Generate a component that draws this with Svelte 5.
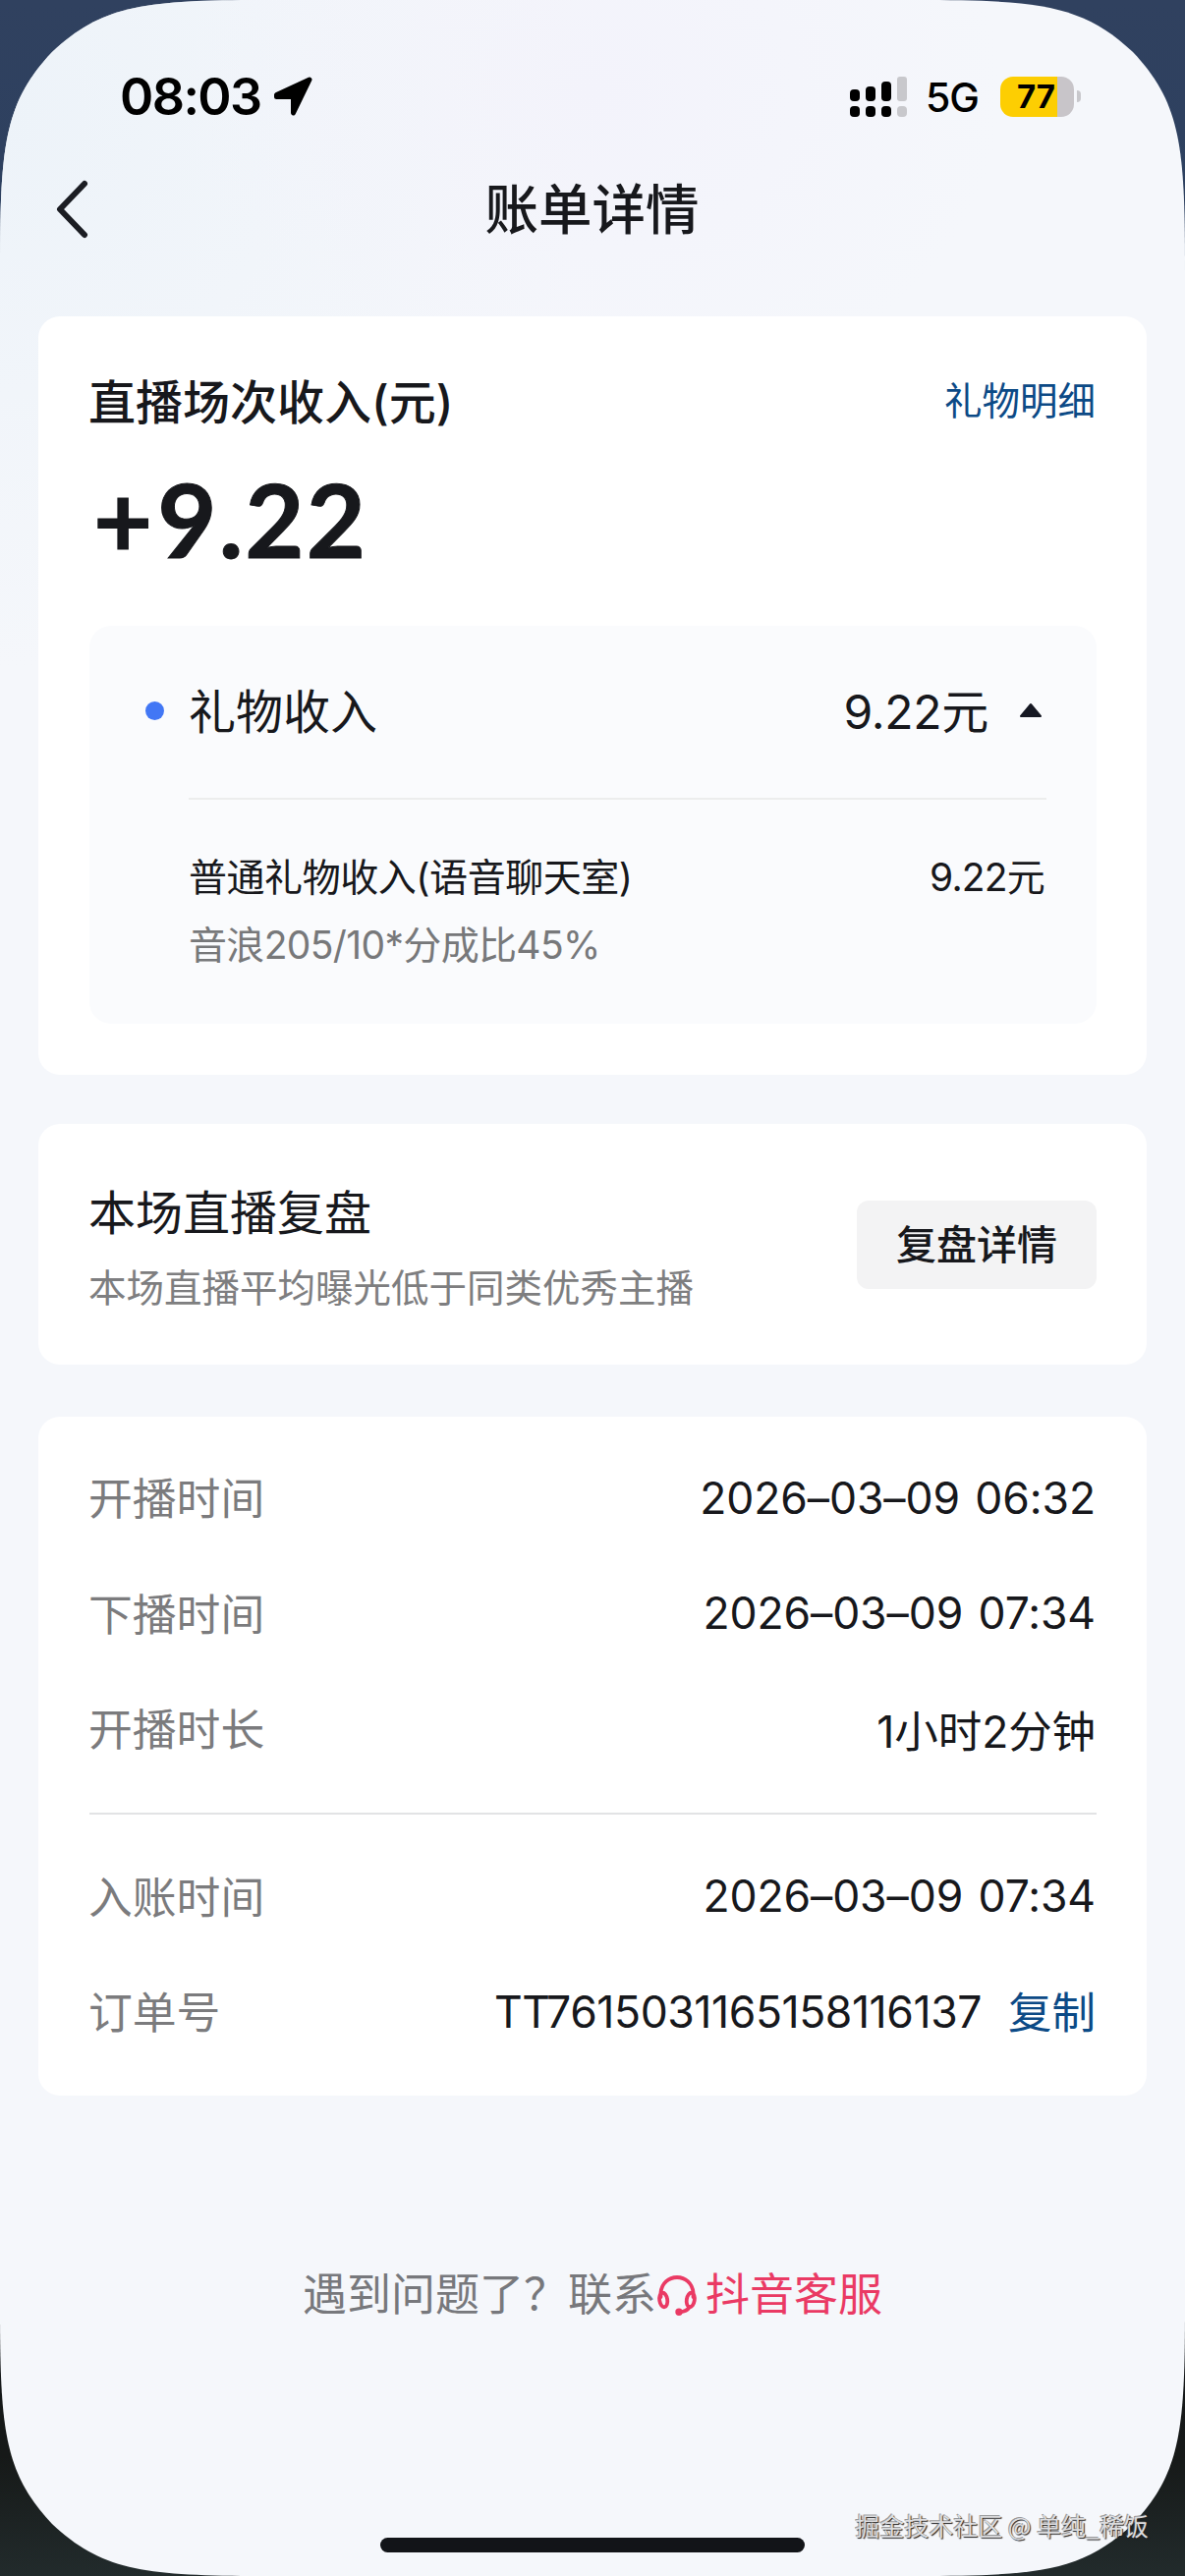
<script>
  let expanded = true;
  let copied = false;

  const gift = {
    name: "礼物收入",
    amount: "9.22元",
    detail: "普通礼物收入(语音聊天室)",
    formula: "音浪205/10*分成比45%",
  };

  const times = [
    { label: "开播时间", value: "2026–03–09 06:32" },
    { label: "下播时间", value: "2026–03–09 07:34" },
    { label: "开播时长", value: "1小时2分钟" },
  ];

  const orderNo = "TT7615031165158116137";

  function toggle() {
    expanded = !expanded;
  }

  function copyOrder() {
    navigator.clipboard?.writeText(orderNo);
    copied = true;
  }
</script>

<div class="backdrop">
  <div class="screen">
    <header class="status">
      <span class="clock">08:03</span>
      <svg class="location" viewBox="0 0 40 40" width="40" height="40">
        <path d="M37 3 20.500 37 V20.500 H3.500 V18.500 Z" fill="#000" stroke="#000" stroke-width="5" stroke-linejoin="round" />
      </svg>
      <svg class="signal" viewBox="0 0 58 41" width="58" height="41">
        <rect x="0" y="13" width="10" height="12" rx="4" />
        <rect x="16" y="10" width="10" height="15" rx="4" />
        <rect x="32" y="5" width="10" height="20" rx="4" />
        <rect x="0" y="30" width="10" height="11" rx="4" />
        <rect x="16" y="30" width="10" height="11" rx="4" />
        <rect x="32" y="30" width="10" height="11" rx="4" />
        <rect x="48" y="0" width="10" height="25" rx="3" fill="#c8c8cc" />
        <rect x="48" y="30" width="10" height="11" rx="4" fill="#c8c8cc" />
      </svg>
      <span class="network">5G</span>
      <span class="battery">77</span>
      <span class="nub"></span>
    </header>

    <nav class="navbar">
      <svg class="back" viewBox="0 0 34 60" width="34" height="60">
        <path d="M30 4 5 30 30 56" fill="none" stroke="#1b1d23" stroke-width="6" stroke-linecap="round" stroke-linejoin="round" />
      </svg>
      <h1>账单详情</h1>
      <span class="back"></span>
    </nav>

    <main>
      <section class="card income">
        <div class="row">
          <h2>直播场次收入(元)</h2>
          <a class="link" href="#gifts">礼物明细</a>
        </div>
        <div class="total"><span>+</span>9.22</div>
        <div class="breakdown">
          <button class="gift" on:click={toggle}>
            <i class="dot"></i>
            <span class="gift-name">{gift.name}</span>
            <span class="gift-amount">{gift.amount}</span>
            <svg class="caret" viewBox="0 0 24 16" width="24" height="16">
              <path d="M12 2 22 14 H2 Z" fill="#161823" stroke="#161823" stroke-width="2" stroke-linejoin="round" />
            </svg>
          </button>
          {#if expanded}
            <div class="detail">
              <div class="row">
                <span class="detail-name">{gift.detail}</span>
                <span class="detail-amount">{gift.amount}</span>
              </div>
              <div class="formula">{gift.formula}</div>
            </div>
          {/if}
        </div>
      </section>

      <section class="card review">
        <div>
          <h3>本场直播复盘</h3>
          <p>本场直播平均曝光低于同类优秀主播</p>
        </div>
        <button class="review-btn">复盘详情</button>
      </section>

      <section class="card info">
        {#each times as item}
          <div class="row">
            <span class="label">{item.label}</span>
            <span class="value">{item.value}</span>
          </div>
        {/each}
        <hr />
        <div class="row">
          <span class="label">入账时间</span>
          <span class="value">2026–03–09 07:34</span>
        </div>
        <div class="row">
          <span class="label">订单号</span>
          <span class="value order">{orderNo}</span>
          <button class="copy" class:copied on:click={copyOrder}>复制</button>
        </div>
      </section>
    </main>

    <div class="help">
      <span>遇到问题了？联系</span>
      <svg viewBox="0 0 42 42" width="42" height="42" fill="none" stroke="#ea3a64" stroke-width="3.8" stroke-linecap="round">
        <path d="M4.500 23 V18.500 C5.500 9 12.500 3 21 3 S36.500 9 37.500 18.500 V23" />
        <ellipse cx="7.200" cy="26" rx="4" ry="7.300" transform="rotate(-9 7.200 26)" />
        <ellipse cx="34.800" cy="26" rx="4" ry="7.300" transform="rotate(9 34.800 26)" />
        <path d="M34 33 C31.500 37 28.500 38 24 38.300" />
        <circle cx="23" cy="38.200" r="1.800" fill="#ea3a64" />
      </svg>
      <a href="#service">抖音客服</a>
    </div>

    <div class="home-bar"></div>
  </div>
  <div class="watermark">掘金技术社区 @ 单纯_稀饭</div>
</div>

<style>
  :global(body) {
    margin: 0;
  }

  .backdrop {
    position: relative;
    width: 1206px;
    height: 2622px;
    overflow: hidden;
    background: linear-gradient(#30415f 0, #2c4060 300px, #14171a 2340px, #161918 2500px, #222b2c 2622px);
    font-family: Inter, "Noto Sans CJK SC", sans-serif;
    color: #17181c;
  }

  .screen {
    display: flex;
    flex-direction: column;
    width: 1206px;
    height: 2622px;
    background:
      radial-gradient(ellipse 420px 330px at 600px 90px, #f3f3fb, rgba(243, 243, 251, 0)),
      radial-gradient(ellipse 600px 560px at 0 120px, #edf3f9, rgba(237, 243, 249, 0)),
      #f5f7fb;
    clip-path: path("M0 275 C0 150 4 105 53 53 C105 4 150 0 275 0 H931 C1056 0 1101 4 1153 53 C1202 105 1206 150 1206 275 V2347 C1206 2472 1202 2517 1153 2569 C1101 2618 1056 2622 931 2622 H275 C150 2622 105 2618 53 2569 C4 2517 0 2472 0 2347 Z");
  }

  h1,
  h2,
  h3,
  p {
    margin: 0;
    font-weight: 400;
  }

  a {
    text-decoration: none;
  }

  button {
    border: 0;
    padding: 0;
    background: none;
    font: inherit;
    color: inherit;
    text-align: left;
  }

  /* status bar */
  .status {
    display: flex;
    align-items: center;
    height: 60px;
    padding: 68px 106px 0 122px;
    color: #000;
  }

  .clock {
    width: 156px;
    font-size: 52px;
    font-weight: 600;
    letter-spacing: -1.6px;
    white-space: nowrap;
  }

  .signal {
    margin-left: auto;
  }

  .network {
    width: 56px;
    margin: 2px 0 0 19px;
    font-size: 41px;
    font-weight: 500;
    letter-spacing: -1px;
  }

  .battery {
    width: 75px;
    height: 41px;
    margin-left: 20px;
    border-radius: 13px;
    background: linear-gradient(90deg, #fdce02 58px, #c8c5c9 58px);
    font-size: 33px;
    line-height: 40px;
    font-weight: 700;
    text-align: center;
    text-indent: -2px;
    box-sizing: border-box;
  }

  .nub {
    width: 4px;
    height: 12px;
    margin-left: 3px;
    border-radius: 0 5px 5px 0;
    background: #c8c8cc;
  }

  .navbar {
    display: flex;
    align-items: center;
    justify-content: space-between;
    height: 80px;
    padding: 45px 57px 69px 56px;
  }

  .back {
    width: 34px;
  }

  h1 {
    font-size: 54.5px;
    line-height: 80px;
    font-weight: 500;
  }

  /* cards */
  main {
    display: flex;
    flex-direction: column;
    padding: 0 39px;
  }

  .card {
    box-sizing: border-box;
    padding: 0 51px 0 52px;
    border-radius: 22px;
    background: #fff;
  }

  .row {
    display: flex;
    align-items: center;
    justify-content: space-between;
    white-space: nowrap;
  }

  .income {
    height: 772px;
    padding-top: 52px;
    margin-bottom: 50px;
  }

  h2 {
    margin-left: -1px;
    font-size: 48px;
    line-height: 72px;
    font-weight: 500;
  }

  .link {
    margin-right: 1px;
    font-size: 38.5px;
    line-height: 68px;
    padding-bottom: 4px;
    color: #0c4a86;
  }

  .total {
    margin: 24px 0 51px 4px;
    font-family: Lato, sans-serif;
    font-size: 104px;
    line-height: 116px;
    font-weight: 700;
    letter-spacing: 2px;
    -webkit-text-stroke: 1px #17181c;
  }

  .total span {
    margin-right: 3px;
  }

  .breakdown {
    height: 405px;
    border-radius: 22px;
    background: #fafbfd;
  }

  .gift {
    display: flex;
    align-items: center;
    width: 100%;
    height: 175px;
    padding: 0 55px 0 57px;
    font-size: 48px;
    line-height: 72px;
  }

  .dot {
    width: 19px;
    height: 19px;
    margin: -3px 25px 0 0;
    border-radius: 50%;
    background: #4277f5;
  }

  .gift-amount {
    margin-left: auto;
    letter-spacing: -0.3px;
  }

  .caret {
    margin-left: 31px;
    margin-top: -4px;
  }

  .detail {
    margin: 0 51px 0 101px;
    padding-top: 41px;
    border-top: 2px solid #eceded;
    font-size: 39px;
  }

  .detail .row {
    height: 70px;
  }

  .detail-name {
    letter-spacing: -0.45px;
  }

  .detail-amount {
    margin-right: 2px;
    letter-spacing: -0.8px;
  }

  .formula {
    padding-top: 2px;
    line-height: 70px;
    color: #77787a;
    letter-spacing: -0.65px;
  }

  .review {
    display: flex;
    align-items: center;
    justify-content: space-between;
    height: 245px;
    margin-bottom: 53px;
  }

  .review > div {
    padding-top: 12px;
    margin-left: -1px;
  }

  h3 {
    font-size: 48px;
    line-height: 76px;
  }

  p {
    font-size: 38.5px;
    line-height: 76px;
    color: #7e7e80;
  }

  .review-btn {
    width: 244px;
    height: 90px;
    padding-bottom: 5px;
    border-radius: 12px;
    background: #f3f3f4;
    font-size: 41px;
    font-weight: 500;
    text-align: center;
  }

  .info {
    height: 691px;
    padding-top: 24px;
    font-size: 44.5px;
  }

  .info .row {
    height: 117.5px;
  }

  .label {
    margin-left: -1px;
    padding-bottom: 4px;
    font-size: 44.8px;
    color: #7b7b7d;
  }

  .value {
    margin-left: auto;
    margin-right: 1px;
    word-spacing: 3px;
    letter-spacing: -0.1px;
  }

  .order {
    letter-spacing: -0.42px;
  }

  hr {
    height: 2px;
    margin: 26px 0 25px;
    border: 0;
    background: #e2e3e5;
  }

  .copy {
    margin-left: 26px;
    padding-bottom: 4px;
    margin-right: 1px;
    color: #0c4a86;
  }

  .help {
    display: flex;
    align-items: center;
    justify-content: center;
    margin-top: 168px;
    font-size: 45px;
    line-height: 70px;
    color: #77787c;
    white-space: nowrap;
  }

  .help svg {
    margin-right: 8px;
  }

  .help a {
    color: #ea3a64;
  }

  .home-bar {
    width: 432px;
    height: 15px;
    margin: auto auto 24px;
    border-radius: 8px;
    background: #121418;
  }

  .watermark {
    position: absolute;
    right: 37px;
    bottom: 34px;
    font-family: "Noto Sans CJK SC", sans-serif;
    font-size: 25px;
    line-height: 36px;
    color: #dcdcde;
    text-shadow: -1px -1px 0 rgba(90, 90, 90, 0.6), 1px 1px 1px #222;
    white-space: nowrap;
  }
</style>
